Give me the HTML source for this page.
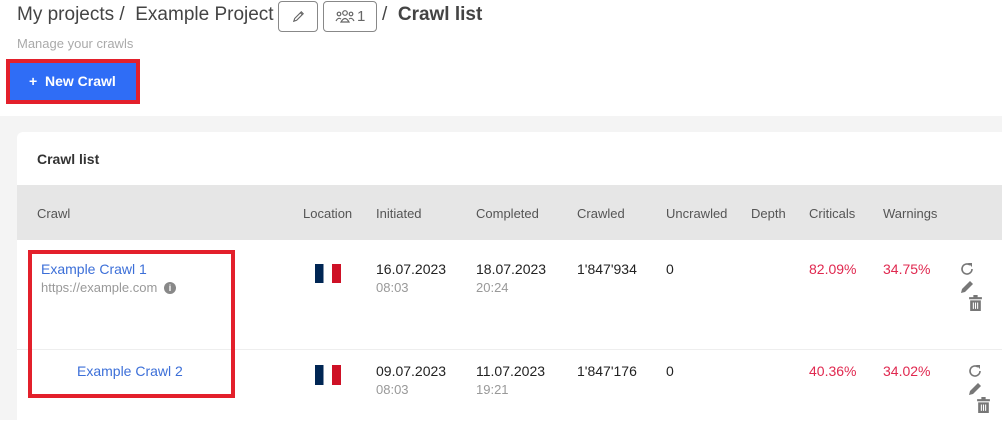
<!DOCTYPE html>
<html><head><meta charset="utf-8"><style>
*{margin:0;padding:0;box-sizing:border-box}
body{width:1002px;height:420px;overflow:hidden;background:#fff;font-family:"Liberation Sans",sans-serif;position:relative;color:#333}
.a{position:absolute;white-space:nowrap}
.h{font-size:13px;color:#555}
.d{font-size:14px;color:#222}
.t{font-size:13px;color:#999}
.r{font-size:14px;color:#e0284f}
.lnk{font-size:14px;color:#3c6fd8}
</style></head><body>
<div class="a" style="left:17px;top:4px;font-size:19px;color:#444">My projects /&nbsp; Example Project</div>
<div class="a" style="left:278px;top:1px;width:40px;height:31px;border:1px solid #888;border-radius:4px"></div>
<svg class="a" style="left:291px;top:9px" width="15" height="15" viewBox="0 0 16 16"><path d="M3 13 L4 10 L11 3 L13 5 L6 12 Z M10 4 L12 6" fill="none" stroke="#666" stroke-width="1.2"/></svg>
<div class="a" style="left:323px;top:1px;width:54px;height:31px;border:1px solid #888;border-radius:4px"></div>
<svg class="a" style="left:335px;top:9px" width="20" height="14" viewBox="0 0 20 14"><g fill="none" stroke="#666" stroke-width="1.2"><circle cx="10" cy="4" r="2.3"/><circle cx="4" cy="5" r="1.8"/><circle cx="16" cy="5" r="1.8"/><path d="M6 13 Q10 6 14 13 Z M1 12 Q3 8 6 10 M19 12 Q17 8 14 10"/></g></svg>
<div class="a" style="left:357px;top:8px;font-size:15px;color:#666">1</div>
<div class="a" style="left:382px;top:4px;font-size:19px;color:#444">/&nbsp; <b>Crawl list</b></div>
<div class="a" style="left:17px;top:36px;font-size:13px;color:#aaa">Manage your crawls</div>
<div class="a" style="left:6px;top:59px;width:134px;height:45px;border:4px solid #e3202b"></div>
<div class="a" style="left:10px;top:63px;width:126px;height:37px;background:#2f6df6;color:#fff;font-size:14px;font-weight:bold;line-height:37px;padding-left:19px">+&nbsp; New Crawl</div>
<div class="a" style="left:0;top:116px;width:1002px;height:304px;background:#f4f4f4"></div>
<div class="a" style="left:17px;top:132px;width:990px;height:300px;background:#fff;border-radius:6px"></div>
<div class="a" style="left:37px;top:151px;font-size:14px;font-weight:bold;color:#333">Crawl list</div>
<div class="a" style="left:17px;top:185px;width:985px;height:55px;background:#e6e6e6"></div>
<div class="a h" style="left:37px;top:206px">Crawl</div>
<div class="a h" style="left:303px;top:206px">Location</div>
<div class="a h" style="left:376px;top:206px">Initiated</div>
<div class="a h" style="left:476px;top:206px">Completed</div>
<div class="a h" style="left:577px;top:206px">Crawled</div>
<div class="a h" style="left:666px;top:206px">Uncrawled</div>
<div class="a h" style="left:751px;top:206px">Depth</div>
<div class="a h" style="left:809px;top:206px">Criticals</div>
<div class="a h" style="left:883px;top:206px">Warnings</div>
<div class="a" style="left:17px;top:349px;width:985px;height:1px;background:#eee"></div>
<!-- row1 -->
<div class="a lnk" style="left:41px;top:261px">Example Crawl 1</div>
<div class="a t" style="left:41px;top:280px">https://example.com</div>
<div class="a" style="left:164px;top:282px;width:12px;height:12px;border-radius:50%;background:#888;color:#fff;font-size:9px;font-weight:bold;text-align:center;line-height:12px">i</div>
<div class="a" style="left:315px;top:264px;width:26px;height:19px;background:linear-gradient(90deg,#002654 0 33%,#fff 33% 66%,#ce1126 66%)"></div>
<div class="a d" style="left:376px;top:261px">16.07.2023</div><div class="a t" style="left:376px;top:280px">08:03</div>
<div class="a d" style="left:476px;top:261px">18.07.2023</div><div class="a t" style="left:476px;top:280px">20:24</div>
<div class="a d" style="left:577px;top:261px">1'847'934</div>
<div class="a d" style="left:666px;top:261px">0</div>
<div class="a r" style="left:809px;top:261px">82.09%</div>
<div class="a r" style="left:883px;top:261px">34.75%</div>
<!-- row2 -->
<div class="a lnk" style="left:77px;top:363px">Example Crawl 2</div>
<div class="a" style="left:315px;top:365px;width:26px;height:20px;background:linear-gradient(90deg,#002654 0 33%,#fff 33% 66%,#ce1126 66%)"></div>
<div class="a d" style="left:376px;top:363px">09.07.2023</div><div class="a t" style="left:376px;top:382px">08:03</div>
<div class="a d" style="left:476px;top:363px">11.07.2023</div><div class="a t" style="left:476px;top:382px">19:21</div>
<div class="a d" style="left:577px;top:363px">1'847'176</div>
<div class="a d" style="left:666px;top:363px">0</div>
<div class="a r" style="left:809px;top:363px">40.36%</div>
<div class="a r" style="left:883px;top:363px">34.02%</div>
<!-- icons -->
<svg class="a" style="left:959px;top:261px" width="16" height="16" viewBox="0 0 16 16"><path d="M13 8 A5 5 0 1 1 11 4" fill="none" stroke="#777" stroke-width="1.6"/><path d="M9 2 L13 2 L13 6 Z" fill="#777"/></svg>
<svg class="a" style="left:959px;top:279px" width="16" height="16" viewBox="0 0 16 16"><path d="M2 14 L3 10 L11 2 L14 5 L6 13 Z" fill="#777"/></svg>
<svg class="a" style="left:968px;top:295px" width="15" height="16" viewBox="0 0 14 15"><path d="M1 2 H13 V4 H1 Z M5 0 H9 V2 H5 Z M2 5 H12 V15 H2 Z" fill="#777"/><path d="M5 7 V13 M7 7 V13 M9 7 V13" stroke="#fff" stroke-width="1"/></svg>
<svg class="a" style="left:967px;top:363px" width="16" height="16" viewBox="0 0 16 16"><path d="M13 8 A5 5 0 1 1 11 4" fill="none" stroke="#777" stroke-width="1.6"/><path d="M9 2 L13 2 L13 6 Z" fill="#777"/></svg>
<svg class="a" style="left:967px;top:381px" width="16" height="16" viewBox="0 0 16 16"><path d="M2 14 L3 10 L11 2 L14 5 L6 13 Z" fill="#777"/></svg>
<svg class="a" style="left:976px;top:397px" width="15" height="16" viewBox="0 0 14 15"><path d="M1 2 H13 V4 H1 Z M5 0 H9 V2 H5 Z M2 5 H12 V15 H2 Z" fill="#777"/><path d="M5 7 V13 M7 7 V13 M9 7 V13" stroke="#fff" stroke-width="1"/></svg>
<div class="a" style="left:28px;top:250px;width:207px;height:148px;border:4px solid #e3202b"></div>
</body></html>
